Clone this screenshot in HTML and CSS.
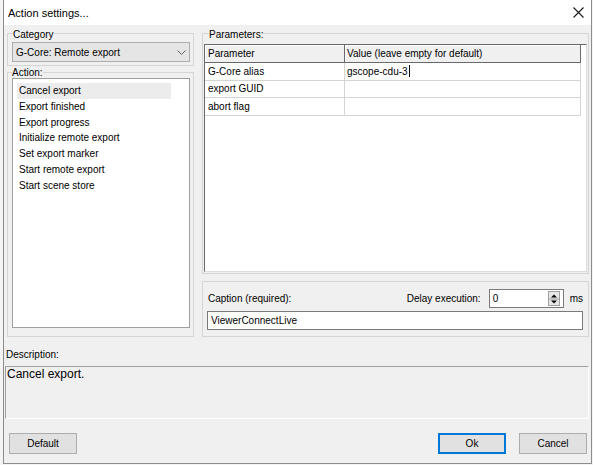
FILE: index.html
```html
<!DOCTYPE html>
<html>
<head>
<meta charset="utf-8">
<title>Action settings...</title>
<link rel="stylesheet" href="styles.css">
</head>
<body>
<div class="window">
  <div class="titlebar">
    <span class="title">Action settings...</span>
    <svg class="close" width="11" height="11" viewBox="0 0 11 11"><path d="M0.5 0.5L10.5 10.5M10.5 0.5L0.5 10.5" stroke="#1a1a1a" stroke-width="1.1" fill="none"/></svg>
  </div>
  <div class="client">
    <div class="top">
      <div class="col-left">
        <fieldset class="group cat">
          <legend>Category</legend>
          <div class="combo">
            <span class="combo-text">G-Core: Remote export</span>
            <svg class="chev" width="9" height="5" viewBox="0 0 9 5"><path d="M0.5 0.5L4.5 4.5L8.5 0.5" stroke="#606060" stroke-width="1" fill="none"/></svg>
          </div>
        </fieldset>
        <fieldset class="group act">
          <legend>Action:</legend>
          <ul class="list">
            <li class="item sel">Cancel export</li>
            <li class="item">Export finished</li>
            <li class="item">Export progress</li>
            <li class="item">Initialize remote export</li>
            <li class="item">Set export marker</li>
            <li class="item">Start remote export</li>
            <li class="item">Start scene store</li>
          </ul>
        </fieldset>
      </div>
      <div class="col-right">
        <fieldset class="group params">
          <legend>Parameters:</legend>
          <div class="grid">
            <div class="grow head">
              <div class="cell c1">Parameter</div>
              <div class="cell c2">Value (leave empty for default)</div>
            </div>
            <div class="grow">
              <div class="cell c1">G-Core alias</div>
              <div class="cell c2">gscope-cdu-3<span class="caret"></span></div>
            </div>
            <div class="grow">
              <div class="cell c1">export GUID</div>
              <div class="cell c2"></div>
            </div>
            <div class="grow">
              <div class="cell c1">abort flag</div>
              <div class="cell c2"></div>
            </div>
          </div>
        </fieldset>
        <div class="panel">
          <div class="panel-row">
            <span class="cap-label">Caption (required):</span>
            <span class="delay-label">Delay execution:</span>
            <div class="spin">
              <span class="spin-val">0</span>
              <div class="spin-btn">
                <svg width="10" height="14" viewBox="0 0 10 14"><path d="M2 5.5L5 2.5L8 5.5Z" fill="#000"/><path d="M0 7H10" stroke="#a0a0a0" stroke-width="1"/><path d="M2 8.5L5 11.5L8 8.5Z" fill="#000"/></svg>
              </div>
            </div>
            <span class="ms">ms</span>
          </div>
          <div class="textbox">ViewerConnectLive</div>
        </div>
      </div>
    </div>
    <div class="desc-label">Description:</div>
    <div class="desc">Cancel export.</div>
    <div class="footer">
      <button class="btn">Default</button>
      <span class="spacer"></span>
      <button class="btn primary">Ok</button>
      <button class="btn">Cancel</button>
    </div>
  </div>
</div>
</body>
</html>
```
FILE: styles.css
```css
* { box-sizing: border-box; }
html, body { margin: 0; padding: 0; }
body {
  background: #f4f4f4;
  font-family: "Liberation Sans", Arial, sans-serif;
  font-size: 10px;
  color: #000;
  width: 593px;
  height: 465px;
  overflow: hidden;
}
.window {
  margin-left: 3px;
  width: 589px;
  height: 464px;
  border: 1px solid #8c8c8c;
  border-top: 0;
  background: #f0f0f0;
  display: flex;
  flex-direction: column;
}
.titlebar {
  height: 25px;
  flex: none;
  background: #fff;
  display: flex;
  align-items: center;
  padding-left: 4px;
  padding-top: 1px;
}
.title {
  font-size: 11px;
  color: #000;
}
.close {
  margin-left: auto;
  margin-right: 7px;
  margin-top: -1px;
}
.client {
  flex: 1;
  display: flex;
  flex-direction: column;
  padding: 0 2px 0 3px;
}
.top {
  height: 312px;
  flex: none;
  display: grid;
  grid-template-columns: 187px 1fr;
  column-gap: 8px;
}
.col-left, .col-right {
  display: flex;
  flex-direction: column;
  min-height: 0;
}
.group {
  margin: 0;
  border: 1px solid #d5d5d5;
  min-width: 0;
}
.group legend {
  line-height: 12px;
  padding: 4px 0 0 0;
  font-size: 10px;
}
.cat {
  flex: none;
  padding: 1px 3px 3px 4px;
}
.cat legend { margin-left: 1px; }
.combo {
  height: 20px;
  border: 1px solid #adadad;
  background: #e5e5e5;
  display: flex;
  align-items: center;
  padding: 0 3px 0 3px;
}
.combo-text { flex: 1; }
.chev { margin-top: 1px; }
.act {
  flex: 1;
  display: flex;
  flex-direction: column;
  padding: 0 3px 8px 4px;
}
.act legend { padding-top: 1px; }
.list {
  flex: 1;
  margin: -1px 0 0 0;
  list-style: none;
  background: #fff;
  border: 1px solid #a0a0a0;
  padding: 4px 0 0 4px;
}
.item {
  height: 15.8px;
  line-height: 15.8px;
  padding-left: 2px;
  white-space: nowrap;
}
.item.sel {
  background: #ececec;
  width: 154px;
}
.params {
  flex: 1;
  display: flex;
  flex-direction: column;
  padding: 3px 1px 1px 1px;
}
.params legend { margin-left: 5px; }
.grid {
  flex: 1;
  background: #fff;
  border: 1px solid;
  border-color: #696969 #dcdcdc #dcdcdc #696969;
  overflow: hidden;
}
.grow {
  display: flex;
  height: 17.6px;
}
.grow.head { height: 18px; }
.cell {
  border-right: 1px solid #d4d4d4;
  border-bottom: 1px solid #d4d4d4;
  display: flex;
  align-items: center;
  white-space: nowrap;
  overflow: hidden;
}
.c1 { width: 140px; padding-left: 3px; }
.c2 { width: 236px; padding-left: 2px; }
.head .cell {
  background: #f0f0f0;
  border-right-color: #696969;
  border-bottom-color: #696969;
  box-shadow: inset 1px 1px 0 #fff;
}
.caret {
  display: inline-block;
  width: 1px;
  height: 12px;
  background: #000;
  margin-left: 1px;
}
.panel {
  flex: none;
  height: 56px;
  margin-top: 7px;
  border: 1px solid #d5d5d5;
  padding: 7px 5px 0 4px;
}
.panel-row {
  display: flex;
  align-items: center;
  height: 19px;
}
.cap-label { margin-left: 1px; }
.delay-label { margin-left: auto; }
.spin {
  margin-left: 8px;
  width: 75px;
  height: 19px;
  background: #fff;
  border: 1px solid #7a7a7a;
  display: flex;
  align-items: center;
  padding: 0 3px 0 3px;
}
.spin-val { flex: 1; }
.spin-btn {
  width: 12px;
  height: 15px;
  background: #e6e6e6;
  border: 1px solid #a0a0a0;
  display: flex;
  align-items: center;
  justify-content: center;
}
.spin-btn svg { display: block; }
.ms { margin-left: 6px; }
.textbox {
  margin-top: 3px;
  height: 19px;
  background: #fff;
  border: 1px solid #7a7a7a;
  padding-left: 3px;
  display: flex;
  align-items: center;
}
.desc-label {
  margin-top: 12px;
  margin-left: -1px;
  line-height: 12px;
  height: 12px;
}
.desc {
  margin-top: 5px;
  margin-left: -2px;
  height: 53px;
  flex: none;
  border-style: solid;
  border-width: 1px;
  border-color: #a0a0a0 #fff #fff #a0a0a0;
  font-size: 12px;
  line-height: 14px;
  padding-left: 1px;
}
.footer {
  margin: 14px 2px 0 2px;
  display: flex;
  height: 21px;
}
.spacer { flex: 1; }
.btn {
  width: 68px;
  height: 21px;
  font-family: "Liberation Sans", Arial, sans-serif;
  font-size: 10px;
  color: #000;
  background: #e1e1e1;
  border: 1px solid #adadad;
  padding: 0;
  margin: 0;
}
.btn.primary {
  border-color: #0078d7;
  box-shadow: inset 0 0 0 1px #0078d7;
  margin-right: 13px;
}
```
